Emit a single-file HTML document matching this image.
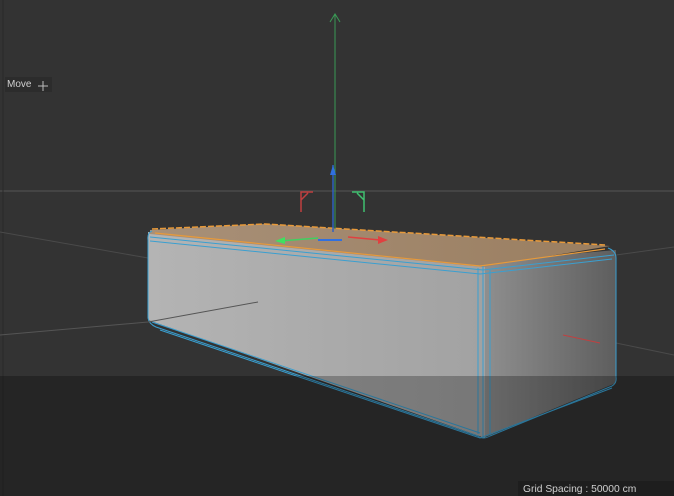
<!DOCTYPE html>
<html><head><style>
html,body{margin:0;padding:0;background:#333;width:674px;height:496px;overflow:hidden;font-family:"Liberation Sans",sans-serif}
.lbl{position:absolute;color:#d0d0d0;font-size:10px}
</style></head><body>
<svg width="674" height="496" style="position:absolute;left:0;top:0">
<defs>
<linearGradient id="fr" x1="0" x2="1" y1="0" y2="0"><stop offset="0" stop-color="#b4b4b4"/><stop offset="1" stop-color="#a2a2a2"/></linearGradient>
<linearGradient id="rt" x1="0" x2="1" y1="0" y2="0"><stop offset="0" stop-color="#909090"/><stop offset="1" stop-color="#5e5e5e"/></linearGradient>
<linearGradient id="tp" x1="0" x2="1" y1="0" y2="0"><stop offset="0" stop-color="#a89078"/><stop offset="1" stop-color="#9a7e60"/></linearGradient>
</defs>
<rect width="674" height="496" fill="#333"/>
<line x1="0" y1="191" x2="674" y2="191" stroke="#4a4a4a" stroke-width="1.5"/>
<line x1="3" y1="0" x2="3" y2="496" stroke="#2a2a2a"/>
<line x1="0" y1="232" x2="148" y2="258" stroke="#4a4a4a"/>
<line x1="0" y1="335" x2="148" y2="322" stroke="#555"/>
<line x1="616" y1="255" x2="674" y2="247" stroke="#4a4a4a"/>
<line x1="616" y1="343" x2="674" y2="355" stroke="#4a4a4a"/>
<line x1="335" y1="14" x2="335" y2="232" stroke="#3a9a55"/>
<path d="M330 22 L335 14 L340 22" fill="none" stroke="#3a9a55"/>
<polygon points="481,262 616,250 616,383 483,438 481,438" fill="url(#rt)"/>
<polygon points="148,232 485,262 485,438 148,320" fill="url(#fr)"/>
<polygon points="150,230 265,224 610,246 483,267 150,234" fill="url(#tp)"/>
<path d="M152 229 L265 224 L605 245" fill="none" stroke="#e89a3a" stroke-width="1.5" stroke-dasharray="6 2"/>
<path d="M155 233 L480 266 L605 249" fill="none" stroke="#e89a3a" stroke-width="1.2"/>
<g fill="none" stroke="#3a9fd0" stroke-width="1">
<path d="M152 231 Q147 233 148 240 L148 318 Q149 324 156 327 L478 436 Q483 440 490 436 L612 386 Q617 383 616 377 L616 258 Q616 251 608 248"/>
<path d="M150 237 L483 270 L614 255"/>
<path d="M150 241 L480 274 L612 259"/>
<path d="M152 322 L480 433"/>
<path d="M478 268 L478 434 M483 266 L483 438 M490 270 L490 434"/>
<path d="M160 330 L480 438 L612 388"/>
</g>
<line x1="148" y1="322" x2="258" y2="302" stroke="#555"/>
<line x1="563" y1="335" x2="600" y2="343" stroke="#c04040"/>
<line x1="333" y1="165" x2="333" y2="232" stroke="#3060c0" stroke-width="1.5"/>
<polygon points="330,175 333,165 336,175" fill="#3070e0"/>
<path d="M313 192 L301 192 L301 212 M301 200 L308 193" fill="none" stroke="#c04040" stroke-width="1.5"/>
<path d="M352 192 L364 192 L364 212 M364 200 L357 193" fill="none" stroke="#40c070" stroke-width="1.5"/>
<line x1="280" y1="241" x2="318" y2="238" stroke="#40d060" stroke-width="1.5"/>
<polygon points="275,241 285,237 285,244" fill="#40e060"/>
<line x1="348" y1="237" x2="380" y2="240" stroke="#e04040" stroke-width="1.5"/>
<polygon points="388,240 378,236 378,244" fill="#e04040"/>
<line x1="318" y1="240" x2="342" y2="240" stroke="#3070e0" stroke-width="2"/>
<rect x="0" y="376" width="674" height="120" fill="rgba(0,0,0,0.26)"/>
<rect x="5" y="77" width="47" height="15" fill="#2c2c2c"/>
<rect x="518" y="481" width="156" height="15" fill="#1e1e1e"/>
<path d="M43 81 L43 91 M38 86 L48 86" stroke="#bbb"/>
</svg>
<div class="lbl" style="left:7px;top:79px">Move</div>
<div class="lbl" style="left:523px;top:484px;font-size:10.3px">Grid Spacing : 50000 cm</div>
</body></html>
